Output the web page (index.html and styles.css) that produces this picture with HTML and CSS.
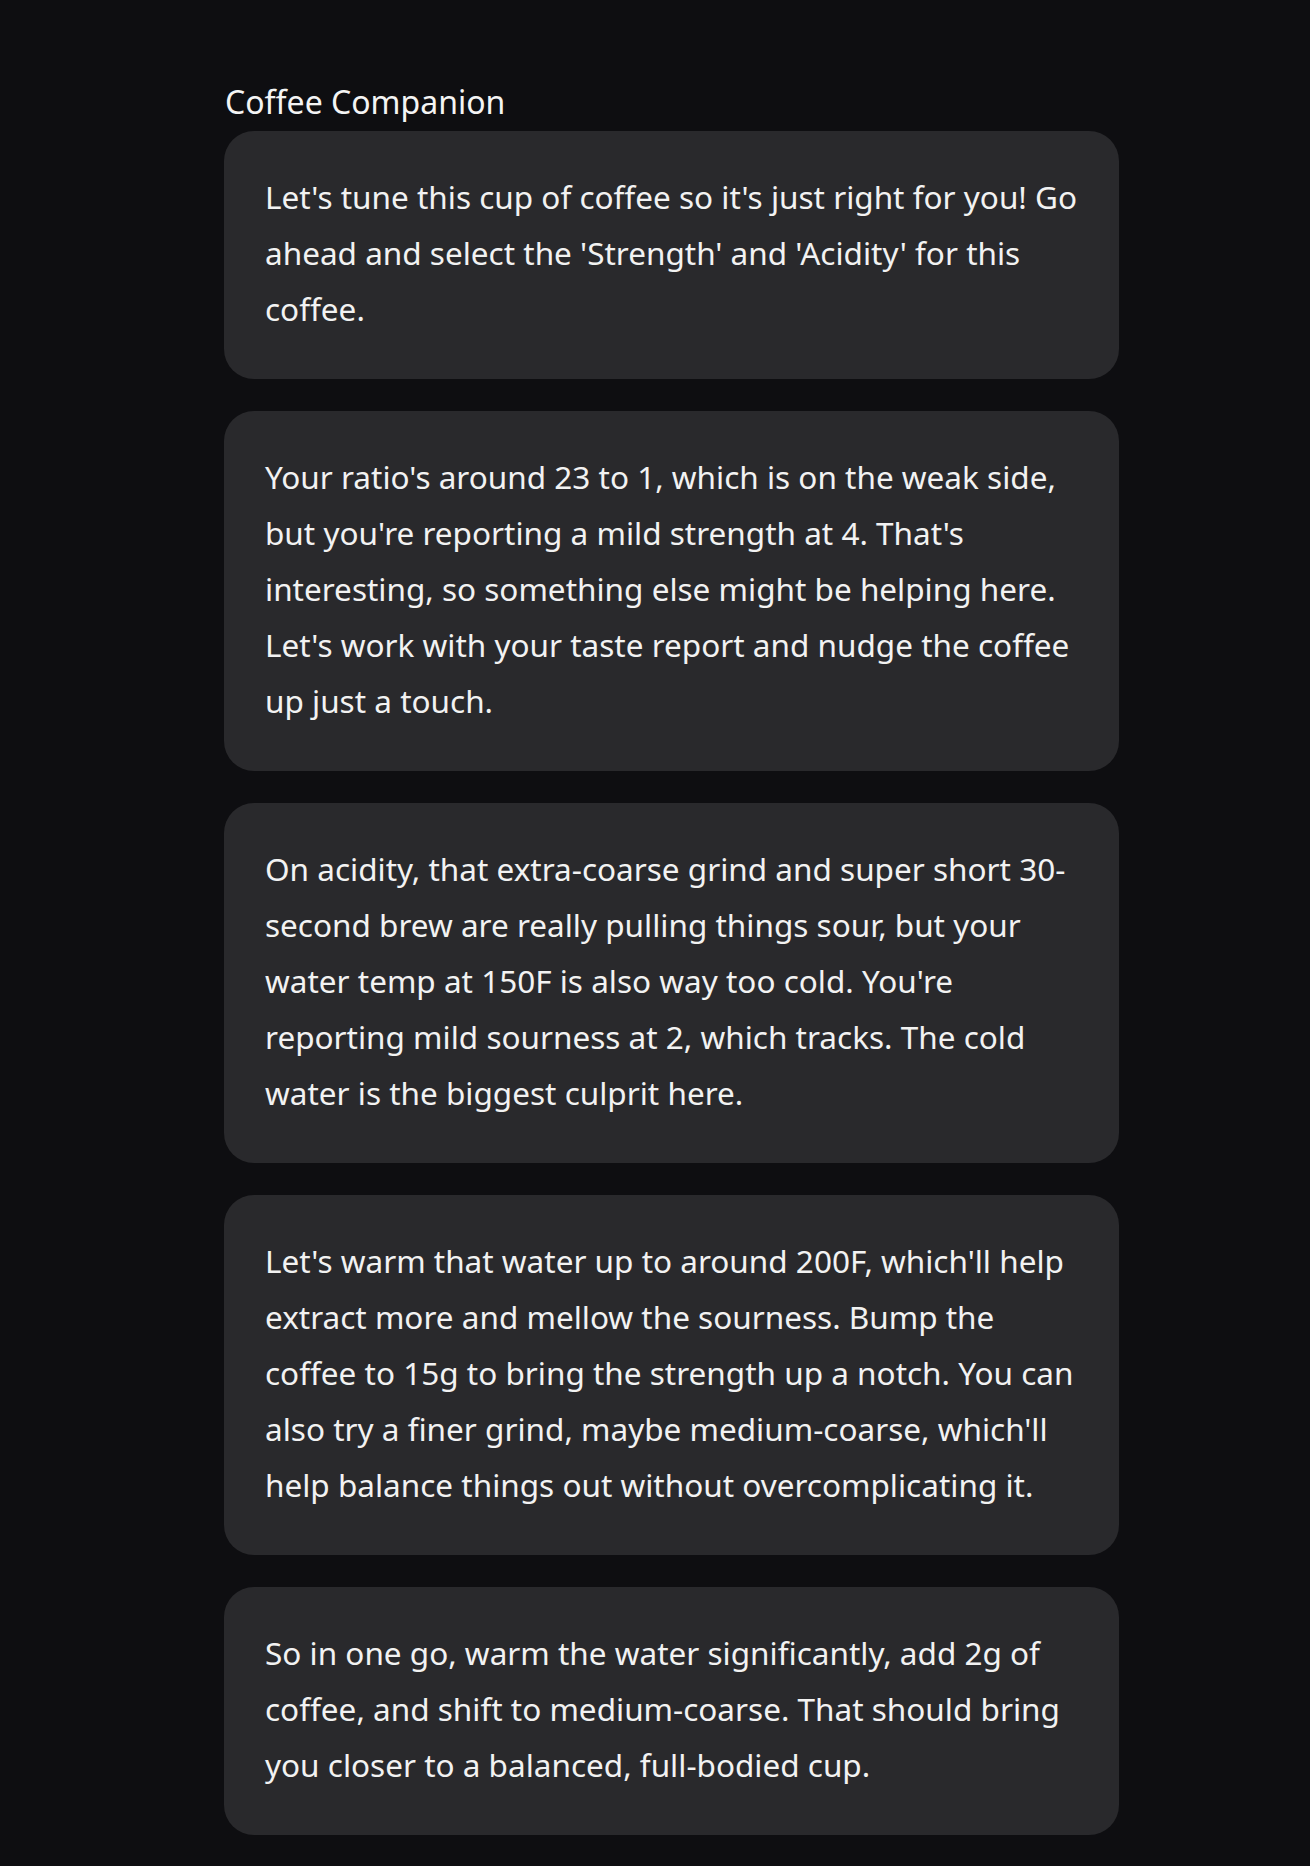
FILE: index.html
```html
<!DOCTYPE html>
<html lang="en">
<head>
<meta charset="utf-8">
<title>Coffee Companion</title>
<link rel="stylesheet" href="styles.css">
</head>
<body>
<main class="chat">
  <h1 class="title">Coffee Companion</h1>
  <div class="bubble"><p>Let's tune this cup of coffee so it's just right for you! Go ahead and select the 'Strength' and 'Acidity' for this coffee.</p></div>
  <div class="bubble"><p>Your ratio's around 23 to 1, which is on the weak side, but you're reporting a mild strength at 4. That's interesting, so something else might be helping here. Let's work with your taste report and nudge the coffee up just a touch.</p></div>
  <div class="bubble"><p>On acidity, that extra-coarse grind and super short 30-second brew are really pulling things sour, but your water temp at 150F is also way too cold. You're reporting mild sourness at 2, which tracks. The cold water is the biggest culprit here.</p></div>
  <div class="bubble"><p>Let's warm that water up to around 200F, which'll help extract more and mellow the sourness. Bump the coffee to 15g to bring the strength up a notch. You can also try a finer grind, maybe medium-coarse, which'll help balance things out without overcomplicating it.</p></div>
  <div class="bubble"><p>So in one go, warm the water significantly, add 2g of coffee, and shift to medium-coarse. That should bring you closer to a balanced, full-bodied cup.</p></div>
</main>
</body>
</html>
```
FILE: styles.css
```css
html, body {
  margin: 0;
  padding: 0;
  background: #0e0e11;
}
body {
  font-family: "Noto Sans", "Open Sans", sans-serif;
  color: #f2f2f2;
  min-height: 1866px;
}
.chat {
  width: 895px;
  margin-left: 224px;
  padding-top: 82px;
  display: flex;
  flex-direction: column;
  gap: 32px;
}
.title {
  margin: 0 0 -23px 1px;
  font-size: 32px;
  font-weight: 400;
  line-height: 40px;
  color: #f4f4f4;
}
.bubble {
  background: #29292c;
  border-radius: 30px;
  padding: 38px 41px 42px;
}
.bubble p {
  margin: 0;
  font-size: 31.5px;
  line-height: 56px;
}
```
